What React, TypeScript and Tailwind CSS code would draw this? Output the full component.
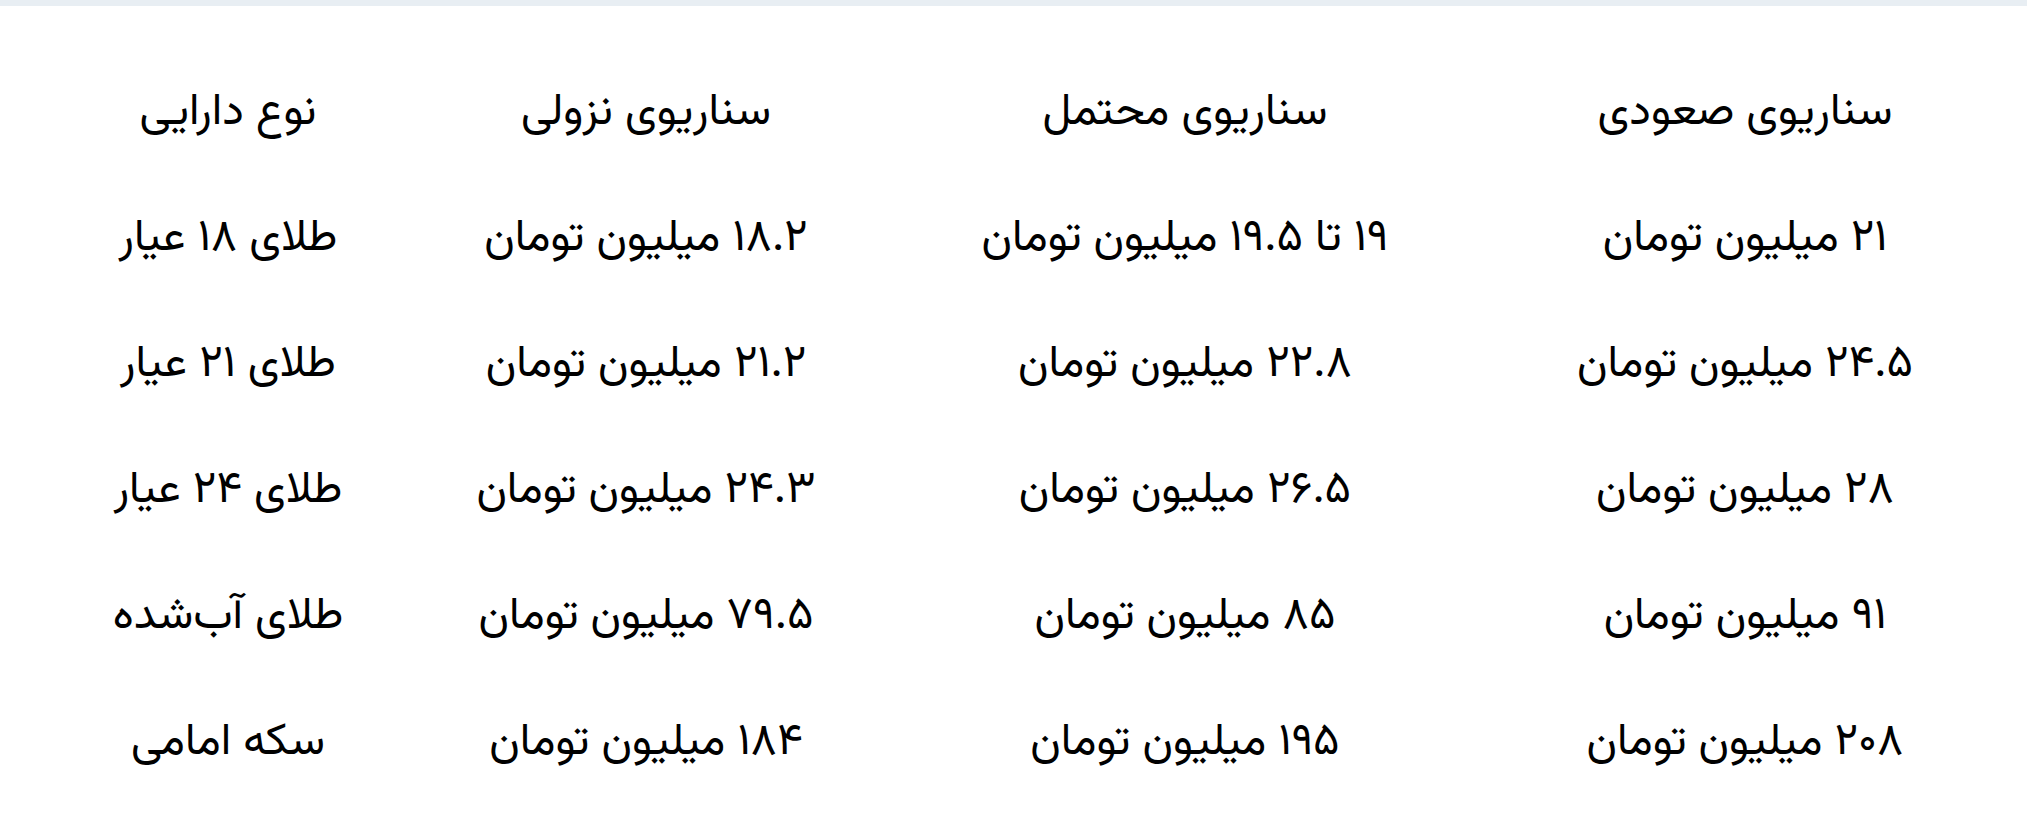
const headers = ['سناریوی صعودی', 'سناریوی محتمل', 'سناریوی نزولی', 'نوع دارایی'];

const rows = [
  ['۲۱ میلیون تومان', '۱۹ تا ۱۹.۵ میلیون تومان', '۱۸.۲ میلیون تومان', 'طلای ۱۸ عیار'],
  ['۲۴.۵ میلیون تومان', '۲۲.۸ میلیون تومان', '۲۱.۲ میلیون تومان', 'طلای ۲۱ عیار'],
  ['۲۸ میلیون تومان', '۲۶.۵ میلیون تومان', '۲۴.۳ میلیون تومان', 'طلای ۲۴ عیار'],
  ['۹۱ میلیون تومان', '۸۵ میلیون تومان', '۷۹.۵ میلیون تومان', 'طلای آب‌شده'],
  ['۲۰۸ میلیون تومان', '۱۹۵ میلیون تومان', '۱۸۴ میلیون تومان', 'سکه امامی'],
];

export default function App() {
  return (
    <div className="min-h-screen bg-white">
      <div className="h-[6px] bg-[#e8eef3]"></div>
      <div
        dir="rtl"
        className="grid grid-cols-[422px_698px_380px_456px] pr-[71px] pt-[45px] text-[45px] text-black [font-family:'Vazirmatn','Noto_Sans_Arabic','DejaVu_Sans',sans-serif]"
      >
        {/* Header */}
        {headers.map((h) => (
          <div key={h} className="h-[126px] flex items-center justify-center whitespace-nowrap">
            {h}
          </div>
        ))}

        {/* Rows */}
        {rows.map((row, i) =>
          row.map((cell, j) => (
            <div key={`${i}-${j}`} className="h-[126px] flex items-center justify-center whitespace-nowrap">
              {cell}
            </div>
          ))
        )}
      </div>
    </div>
  );
}
